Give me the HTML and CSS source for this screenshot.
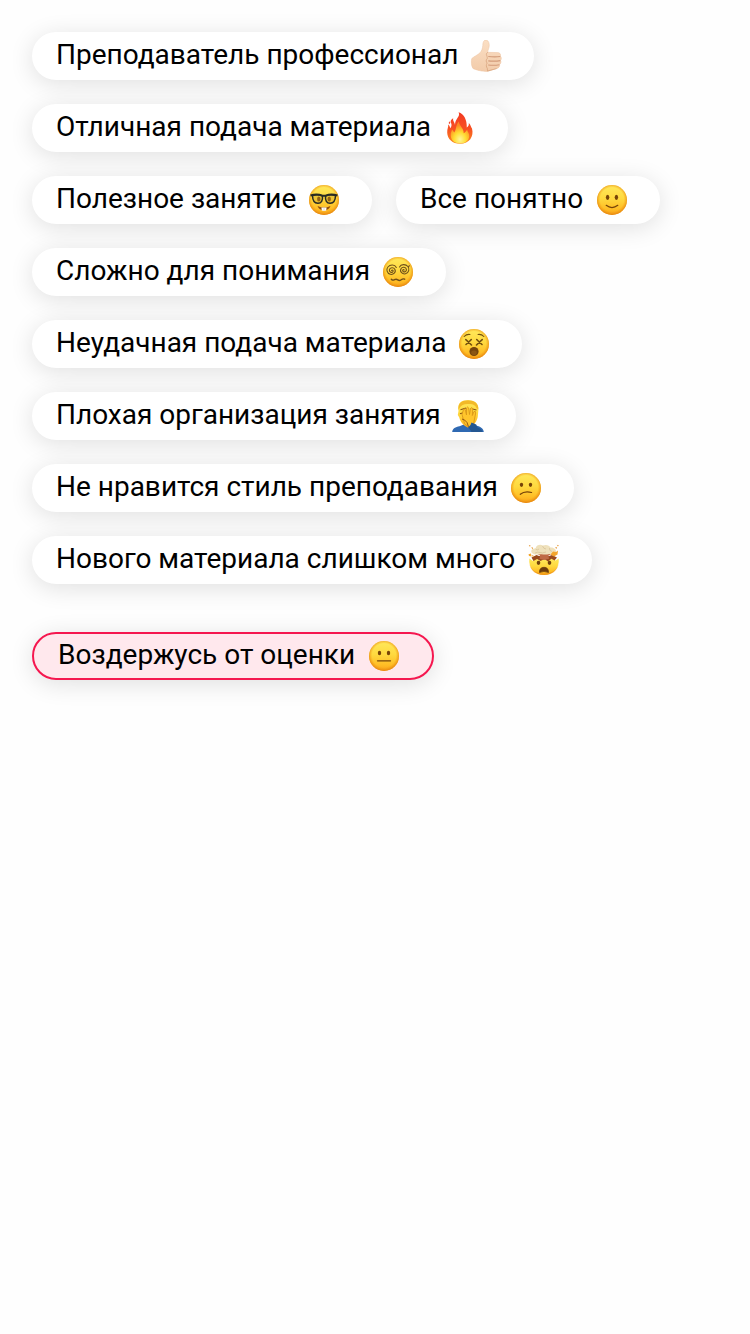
FILE: index.html
```html
<!DOCTYPE html>
<html lang="ru">
<head>
<meta charset="utf-8">
<title>Отзыв о занятии</title>
<link rel="stylesheet" href="styles.css">
</head>
<body>
<svg class="defs" width="0" height="0" aria-hidden="true">
  <defs>
    <linearGradient id="face" x1="0" y1="0" x2="0" y2="1">
      <stop offset="0" stop-color="#ffe95c"/><stop offset=".45" stop-color="#ffd93f"/><stop offset=".8" stop-color="#ffbd25"/><stop offset="1" stop-color="#f8a41b"/>
    </linearGradient>
    <radialGradient id="rim" cx=".5" cy=".48" r=".53">
      <stop offset=".74" stop-color="#f39a10" stop-opacity="0"/><stop offset="1" stop-color="#e07a0c" stop-opacity=".9"/>
    </radialGradient>
    <linearGradient id="skin" x1="0" y1="0" x2="0" y2="1">
      <stop offset="0" stop-color="#fbdfc4"/><stop offset="1" stop-color="#f2cbaa"/>
    </linearGradient>
    <linearGradient id="flame" x1="0" y1="0" x2="0" y2="1">
      <stop offset="0" stop-color="#f23a23"/><stop offset=".55" stop-color="#f85222"/><stop offset="1" stop-color="#f98a20"/>
    </linearGradient>
    <radialGradient id="core" cx=".5" cy=".82" r=".65">
      <stop offset="0" stop-color="#fff59a"/><stop offset=".5" stop-color="#ffdc32"/><stop offset="1" stop-color="#fd8b24"/>
    </radialGradient>
    <g id="head">
      <circle cx="16" cy="16" r="15" fill="url(#face)"/>
      <circle cx="16" cy="16" r="15" fill="url(#rim)"/>
    </g>
  </defs>
</svg>
<main class="feedback">
  <div class="chips">
    <button class="chip" style="width:502px"><span class="label">Преподаватель профессионал</span>
      <svg class="emoji" viewBox="0 0 32 32">
        <path d="M1.800 18.500C4 16.500 7.800 15 10 12.800 11.800 10.800 12.500 8.500 12.800 5.500 12.900 1.200 14.400-.2 16.400.1 18.700.6 19.800 4 19 7.300 18.500 9.300 17.700 11 17.800 12.300L27.800 12.600C30 12.800 31 14.300 30.400 16.200 31.700 17.400 31.600 19.300 30.500 20.400 31.300 21.800 31 23.600 29.600 24.500 30 26.300 28.700 28.200 26.700 28.500L17.500 31.400C12.500 31.800 5.500 29.700 3 28.500 1.200 26.200 1 21 1.800 18.500Z" fill="url(#skin)" stroke="#edc3a0" stroke-width=".5"/>
        <path d="M30.300 16.500Q25 17.200 18.300 16.500M30.400 20.600Q25 21.500 18.300 20.900M29.500 24.800Q24 25.700 18.200 25" fill="none" stroke="#d39b79" stroke-width="1.100"/>
        <path d="M17.800 12.300C14.800 14.500 17.500 15.200 17.300 18.500 15.700 20 15.900 22 17.200 23 15.800 25 16.200 27 17.300 28.200L17.500 31 26.700 28.500" fill="none" stroke="#dba983" stroke-width=".9"/>
      </svg></button>
    <button class="chip" style="width:476px"><span class="label">Отличная подача материала</span>
      <svg class="emoji" viewBox="0 0 32 32">
        <path d="M16 31.800C8.500 31.800 3.300 27 3.200 20.500 3.100 17 4.600 14.800 4.200 12.500 5.500 13.600 5.900 14.700 6.300 16.200 7.600 14.900 8 12.500 6.800 10.500 6.200 8.500 7.600 7.300 9.200 6.300 8.600 9.500 10.600 9.500 11 13 11 6 16.800 5 14.600.2 20 2 23 7.500 22.800 15.500 24.700 14.400 25 12.500 24.800 11 27 12.700 26.700 15.200 28 16.500 30.200 24.500 25.300 31.800 16 31.800Z" fill="url(#flame)"/>
        <path d="M5.300 12.200C4.300 11 4.800 9.800 6 9.600 6.400 10.900 6.200 11.600 5.300 12.200Z" fill="#f4472e"/>
        <path d="M16 31.400C9.800 31.400 6.700 27.600 6.700 23 6.700 20.500 7.600 19.200 8 17.500 9 18.700 9.500 19.500 10.200 20.500 12.500 17.800 11.500 13.500 14.800 9.500 14.900 13.500 19.900 16 19.700 21.200 21.600 20.500 22.200 18.800 23.200 17.600 23.200 20 25.600 21.200 25.200 24.500 24.800 28.900 21.500 31.400 16 31.400Z" fill="url(#core)"/>
      </svg></button>
    <button class="chip" style="width:340px"><span class="label">Полезное занятие</span>
      <svg class="emoji" viewBox="0 0 32 32">
        <use href="#head"/>
        <ellipse cx="10.800" cy="15" rx="1.700" ry="2.500" fill="#78420a"/><ellipse cx="21.200" cy="15" rx="1.700" ry="2.500" fill="#78420a"/>
        <path d="M4.500 11.500Q10 9.700 14.500 11.800C14.900 16.500 13.400 19.300 9.800 19.200 6.200 19.200 4.600 16 4.500 11.500ZM27.500 11.500Q22 9.700 17.500 11.800C17.100 16.500 18.600 19.300 22.200 19.200 25.800 19.200 27.400 16 27.500 11.500Z" fill="#c99e22" fill-opacity=".35" stroke="#292b24" stroke-width="1.500"/>
        <path d="M2.500 11.500Q9 9.400 14.500 11.800H17.500Q23 9.400 29.500 11.500" fill="none" stroke="#292b24" stroke-width="1.900"/>
        <path d="M9.500 22Q16 25 22.500 22C21.300 25 19 26.300 16 26.300S10.700 25 9.500 22Z" fill="#8d4a0c"/>
        <path d="M13.400 23.400Q16 23.800 18.600 23.400L18.200 26.500Q16 27.300 13.800 26.500Z" fill="#fff"/><path d="M16 23.600v3.200" stroke="#b9b3a3" stroke-width=".5"/>
      </svg></button>
    <button class="chip" style="width:264px"><span class="label">Все понятно</span>
      <svg class="emoji" viewBox="0 0 32 32">
        <use href="#head"/>
        <ellipse cx="11.600" cy="13.300" rx="1.700" ry="2.600" fill="#774408"/><ellipse cx="20.400" cy="13.300" rx="1.700" ry="2.600" fill="#774408"/>
        <path d="M10.200 21.300Q16 25.800 21.800 21.300" fill="none" stroke="#774408" stroke-width="1.200" stroke-linecap="round"/>
      </svg></button>
    <button class="chip" style="width:414px"><span class="label">Сложно для понимания</span>
      <svg class="emoji" viewBox="0 0 32 32">
        <use href="#head"/>
        <g fill="none" stroke="#70501a" stroke-width="1.100" stroke-linecap="round">
          <path d="M9.500 14.500C10.300 13.500 11.600 14.500 11 15.500 10 17.300 7 16 7.400 13.900 7.900 11.300 11.600 11 12.800 13.200 14.500 16.400 11.200 19 8.300 18.300 4.800 17.500 4 13.300 5.900 11 8.300 8.100 12.800 8.400 14.300 11.400"/>
          <path d="M22.200 14C21.500 13 20.200 14 20.800 15 21.800 16.800 24.800 15.500 24.400 13.400 23.900 10.800 20.200 10.500 19 12.700 17.300 15.900 20.600 18.500 23.500 17.800 27 17 27.800 12.800 25.900 10.500 23.700 7.800 19 8 17.500 10.900M25.900 10.500Q27 11.200 27.200 9.500"/>
          <path d="M9.300 23.200Q10.800 24.800 12.500 23.700T15.800 23.900 19.200 23.800 22.700 23.200" stroke-width="1.400"/>
        </g>
      </svg></button>
    <button class="chip" style="width:490px"><span class="label">Неудачная подача материала</span>
      <svg class="emoji" viewBox="0 0 32 32">
        <use href="#head"/>
        <g fill="none" stroke="#73500e" stroke-width="1.600" stroke-linecap="round">
          <path d="M7.800 11.600Q10 13.500 13.500 17M13.300 11.500Q11 14 8 16.500M18.700 11.500Q21 14 24 16.500M24.200 11.600Q22 13.500 18.500 17"/>
          <path d="M6.200 8.500Q8.500 6 12 6.500M25.800 8.500Q23.500 6 20 6.500" stroke-width="1.100"/>
        </g>
        <circle cx="16" cy="23.500" r="4.600" fill="#76450c"/><ellipse cx="16" cy="24.700" rx="2.800" ry="2.300" fill="#8b5613"/>
      </svg></button>
    <button class="chip" style="width:484px"><span class="label">Плохая организация занятия</span>
      <svg class="emoji" viewBox="0 0 32 32">
        <path d="M.2 32C.5 28.500 3.500 27 7.500 26.300L13 24 24 25.500C29 26.500 31.500 28.800 31.800 32Z" fill="#2f69b2"/>
        <path d="M6.500 11C5.300 3 8.800.2 16 .2S27 3.500 26.300 11L25.800 16.500C25.400 20.500 22 25 18 28.500 13 27 8.100 22.500 7.300 17.500L5.800 15Z" fill="url(#face)"/>
        <path d="M6.500 10C5.500 3 10 .3 16 .3S27 3.500 26.300 9.500L24.500 8Q22.500 3.500 17 4 10 3.500 7.500 8Z" fill="#f2b928"/>
        <path d="M8.500 9.800 14 8M18.500 8.500 24.500 10M8 13.800 12 12.500" stroke="#8b5314" stroke-width="1.200"/>
        <path d="M10 14.500 11.500 9.500Q13 8 13.300 10L14.500 15V8Q15.500 6 16.700 8L17.500 14.500 18.500 8.500Q20 6.500 20.800 9L20.300 15.500 22 11.500Q23.800 10.500 23.700 13L21.500 24 17.500 27.800 12.500 23.500Z" fill="#ffc52c" stroke="#d99718" stroke-width=".9"/>
        <path d="M10 19Q13 19.500 15 22.500L16.500 26.700" fill="none" stroke="#935713" stroke-width="1"/>
        <path d="M16 27.500 18.500 25 19.500 22.500 24.200 24.500 25.500 27.500Q29.500 28.500 30.500 32H19.500Q18.300 29.500 16 27.500Z" fill="#245792"/>
      </svg></button>
    <button class="chip" style="width:542px"><span class="label">Не нравится стиль преподавания</span>
      <svg class="emoji" viewBox="0 0 32 32">
        <use href="#head"/>
        <ellipse cx="11.500" cy="12.800" rx="1.700" ry="2.100" fill="#774408"/><ellipse cx="20.500" cy="12.800" rx="1.700" ry="2.100" fill="#774408"/>
        <path d="M10.300 22.300Q14.500 18.600 21.600 20.500" fill="none" stroke="#774408" stroke-width="1.200" stroke-linecap="round"/>
      </svg></button>
    <button class="chip" style="width:560px"><span class="label">Нового материала слишком много</span>
      <svg class="emoji" viewBox="0 0 32 32">
        <path d="M1.300 14.500 5 17 8 14.500 12 16.500 16 15 20 16.800 24 14.500 27.500 16.500 30.700 14.500C31.600 24 25.500 31 16 31S.4 24 1.300 14.500Z" fill="url(#face)"/>
        <path d="M1.300 20C3 27 8 31 16 31S29 27 30.700 20C28.500 26.500 23.500 29.500 16 29.500S3.500 26.500 1.300 20Z" fill="#eb8e12" opacity=".6"/>
        <path d="M3.500 13.500 8.500 11 11 12 21 12 24 11 29 13.500 26.500 16.500 23.500 14.800 20 17.500 16.500 15 12.500 17 9 15 5.500 17Z" fill="#9a4a1d"/>
        <path d="M8.500 9.500H24L20.500 11.500 21 14.800 16 16 11.500 14.800 12 11.500Z" fill="#bf6945"/>
        <path d="M3.500 8.500C2.500 5.500 5.500 4.200 7.500 4.500 8.300.8 12.500.2 14.800 1.500 18 .2 21.500 1 22.400 3.500 25.500 3 28.800 5.500 28 8.500 25.500 11 22.500 9.500 20.500 10.200 17.500 11.200 14.500 10 12.500 10.300 9 10.800 5.500 11 3.500 8.500Z" fill="#efe1bc"/>
        <path d="M7.500 5Q9 7 11 5M14.500 2Q15.500 5 18 5M21.500 4Q21 7 24 7.500M7 9Q10 7.500 12 8.500T18 8" fill="none" stroke="#d8c499" stroke-width=".8"/>
        <path d="M22.500 10.500 25 7.500 28 8 30 6.500 29.500 10.500 26 12.500ZM.5 10.300 3 9.500 3.500 12.500 1 12Z" fill="#f3a52c"/>
        <path d="M.8 1 2.500 1.300 2 3ZM3 3.500H5V5.300ZM28.800.8 31 1.500 29.800 2.500ZM27 3.500 29 3 28.500 5ZM3.500 12 5 11 6 13Z" fill="#e89b3a"/>
        <ellipse cx="10.500" cy="18.800" rx="1.800" ry="2.100" fill="#71400c"/><ellipse cx="21.500" cy="18.800" rx="1.800" ry="2.100" fill="#71400c"/>
        <path d="M11.500 28.500C11.300 24.800 13.300 23.300 16 23.300S20.700 24.800 20.500 28.500Q16 26.500 11.500 28.500Z" fill="#6d3d0b" stroke="#6d3d0b" stroke-width=".7"/>
      </svg></button>
  </div>
  <button class="chip chip-selected" style="width:402px"><span class="label">Воздержусь от оценки</span>
    <svg class="emoji" viewBox="0 0 32 32">
      <use href="#head"/>
      <ellipse cx="11.500" cy="13" rx="1.700" ry="2.300" fill="#774408"/><ellipse cx="20.500" cy="13" rx="1.700" ry="2.300" fill="#774408"/>
      <path d="M9.500 20.800H22.500" fill="none" stroke="#774408" stroke-width="1.300" stroke-linecap="round"/>
    </svg></button>
</main>
</body>
</html>
```
FILE: styles.css
```css
* { box-sizing: border-box; }
body { margin: 0; background: #fefefe; font-family: Roboto, "Liberation Sans", sans-serif; }
.defs { position: absolute; }
.feedback { padding: 32px; min-height: 100vh; }
.chips { display: flex; flex-wrap: wrap; gap: 24px; margin-bottom: 48px; }
.chip {
  display: inline-flex;
  align-items: center;
  justify-content: space-between;
  height: 48px;
  padding: 0 32px 0 24px;
  border: 0;
  border-radius: 24px;
  background: #fff;
  box-shadow: 0 4px 24px rgba(0, 0, 0, .12);
  color: #000;
  font: 400 28px/44px Roboto, "Liberation Sans", sans-serif;
  white-space: nowrap;
}
.chip-selected { border: 2px solid #f5174f; background: #ffe8ed; }
.label { display: block; margin-top: -2px; }
.emoji { display: block; flex: none; width: 32px; height: 32px; }
```
